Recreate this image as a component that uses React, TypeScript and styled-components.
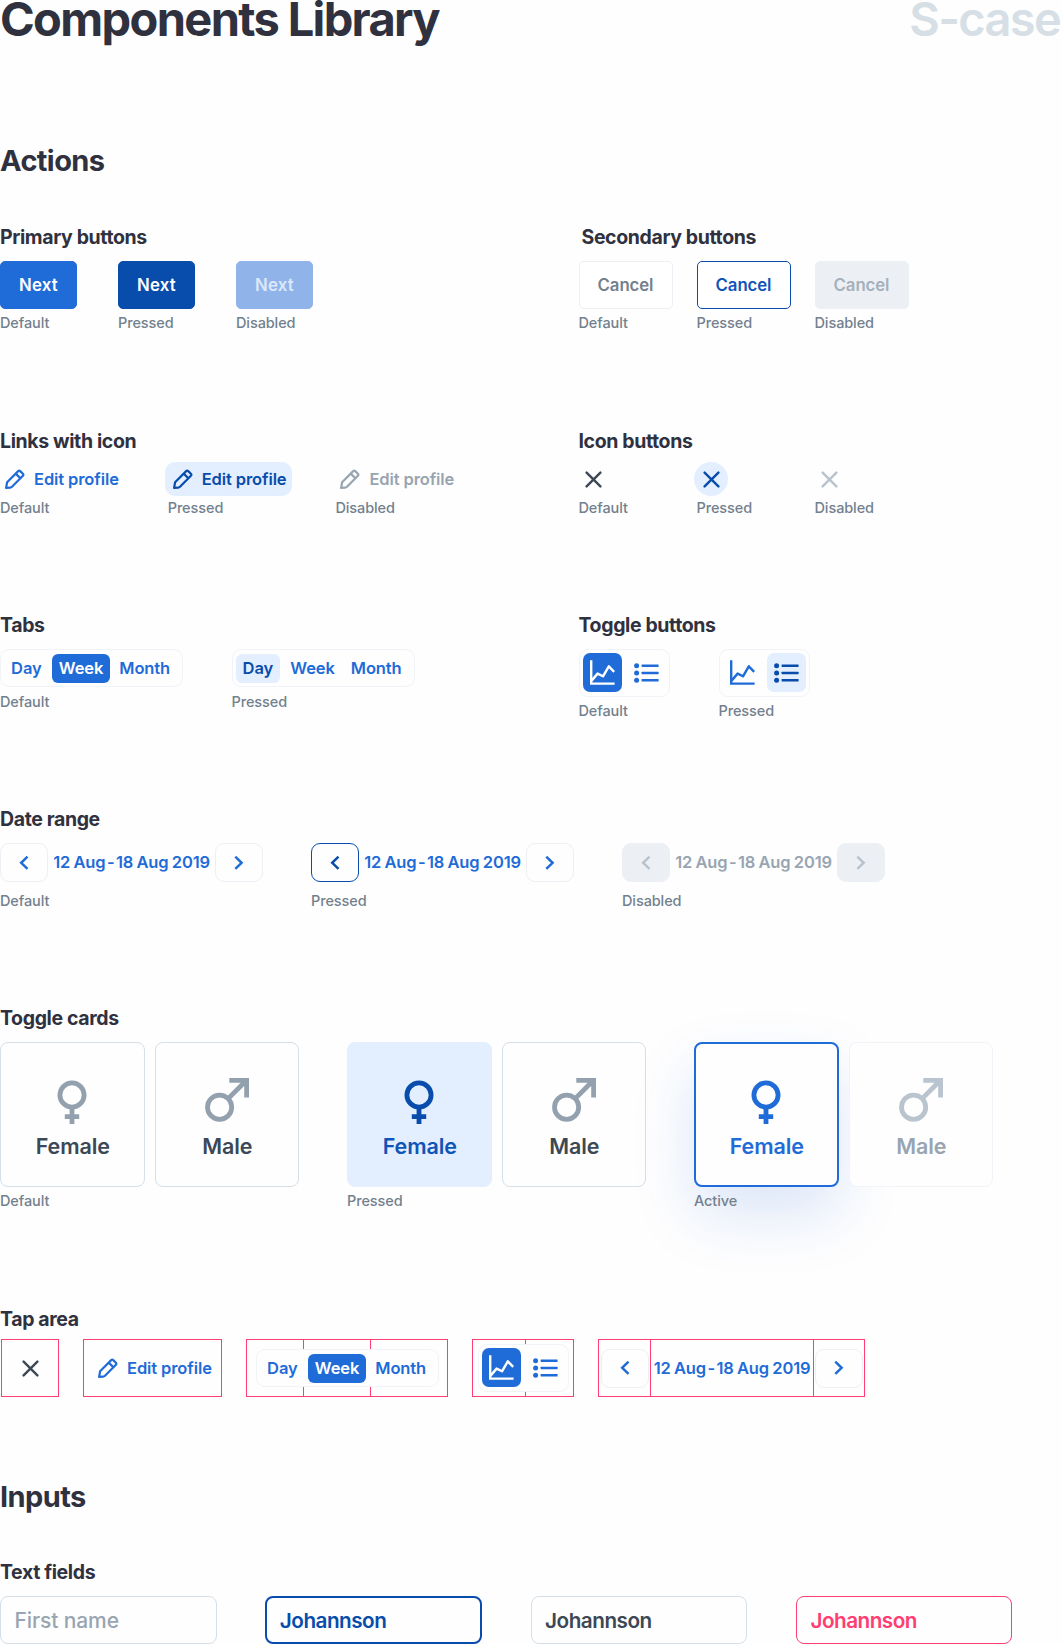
import React from "react";
import styled, { createGlobalStyle, css } from "styled-components";

const c = {
  ink: "#30313f",
  text: "#3c4855",
  grey: "#73808d",
  mute: "#98a5b1",
  faint: "#b8c3ce",
  line: "#d5dfe8",
  hair: "#f0f4f8",
  fill: "#ecf0f5",
  blue: "#1f6bd8",
  deep: "#084cac",
  sky: "#e3efff",
  red: "#ff3d73",
};

const Global = createGlobalStyle`
  * { box-sizing: border-box; }
  body { margin: 0; background: #fefefe; }
  button { font: inherit; padding: 0; margin: 0; border: 0; background: none; }
  svg { display: block; flex: none; }
`;

const Page = styled.main`
  width: 1062px;
  height: 1645px;
  overflow: hidden;
  font-family: Inter, "Liberation Sans", sans-serif;
  color: ${c.ink};
  white-space: nowrap;
`;

const Header = styled.header`
  display: flex;
  justify-content: space-between;
  height: 146px;
  padding-right: 2px;
`;

const Title = styled.h1<{ $pale?: boolean }>`
  margin: 0;
  font-size: 47px;
  line-height: 37px;
  font-weight: ${(p) => (p.$pale ? 600 : 700)};
  letter-spacing: ${(p) => (p.$pale ? -1.7 : -1.65)}px;
  color: ${(p) => (p.$pale ? "#d6dfe6" : c.ink)};
`;

const H2 = styled.h2<{ $h: number }>`
  margin: 0;
  height: ${(p) => p.$h}px;
  font-size: 29px;
  line-height: 30px;
  font-weight: 700;
  letter-spacing: -0.6px;
`;

const Row = styled.div<{ $h: number }>`
  display: grid;
  grid-template-columns: 578.5px 1fr;
  height: ${(p) => p.$h}px;
`;

const Full = styled.section<{ $h: number }>`
  height: ${(p) => p.$h}px;
`;

const H3 = styled.h3<{ $indent?: number }>`
  margin: 0 0 12px;
  padding-left: ${(p) => p.$indent ?? 0}px;
  font-size: 19.5px;
  line-height: 24px;
  font-weight: 700;
  letter-spacing: -0.38px;
`;

const States = styled.div<{ $gap: number }>`
  display: flex;
  align-items: flex-start;
  gap: ${(p) => p.$gap}px;
`;

const State = styled.div<{ $w?: number; $gap?: number }>`
  display: flex;
  flex-direction: column;
  align-items: flex-start;
  width: ${(p) => (p.$w ? p.$w + "px" : "auto")};
  gap: ${(p) => p.$gap ?? 5}px;
`;

const Caption = styled.span`
  font-size: 14.5px;
  line-height: 20px;
  font-weight: 500;
  color: ${c.grey};
  letter-spacing: -0.1px;
`;

type Look = "default" | "pressed" | "disabled";

const label = css`
  font-size: 16.5px;
  font-weight: 600;
  line-height: 20px;
  letter-spacing: -0.1px;
`;

const Button = styled.button<{ $kind: "primary" | "secondary"; $look: Look }>`
  ${label}
  width: ${(p) => (p.$kind === "primary" ? 77 : 94)}px;
  height: 48px;
  padding-bottom: 1px;
  font-size: 16.8px;
  border-radius: 5px;
  border: 1px solid transparent;
  ${(p) =>
    p.$kind === "primary"
      ? {
          default: `background:${c.blue};border-color:${c.blue};color:#fff;letter-spacing:0.2px;`,
          pressed: `background:${c.deep};border-color:${c.deep};color:#fff;letter-spacing:0.2px;`,
          disabled: `background:#90b4ea;border-color:#90b4ea;color:#dce8fa;letter-spacing:0.2px;`,
        }[p.$look]
      : {
          default: `background:#fff;border-color:${c.fill};color:${c.grey};`,
          pressed: `background:#fff;border-color:${c.deep};color:#0f55b8;`,
          disabled: `background:${c.fill};border-color:${c.fill};color:#a5b0bb;`,
        }[p.$look]}
`;

const LinkButton = styled.button<{ $look: Look }>`
  ${label}
  display: flex;
  align-items: center;
  gap: 9px;
  width: 127px;
  height: 34px;
  margin: -3px 0 0 -3px;
  padding: 0 0 0 8px;
  border-radius: 10px;
  color: ${(p) => ({ default: c.blue, pressed: c.deep, disabled: c.mute })[p.$look]};
  background: ${(p) => (p.$look === "pressed" ? c.sky : "transparent")};
`;

const IconButton = styled.button<{ $look: Look }>`
  display: flex;
  align-items: center;
  justify-content: center;
  width: 34px;
  height: 34px;
  margin: -3px 0 0 -2.5px;
  border-radius: 50%;
  color: ${(p) => ({ default: c.text, pressed: c.deep, disabled: c.faint })[p.$look]};
  background: ${(p) => (p.$look === "pressed" ? c.sky : "transparent")};
`;

const TabBar = styled.div`
  position: relative;
  display: flex;
  align-items: center;
  width: 183px;
  height: 38px;
  padding: 0 3px;
  border: 1px solid ${c.hair};
  border-radius: 9px;
  background: #fefefe;
`;

type Mark = "none" | "active" | "pressed";

const markStyle = css<{ $mark: Mark }>`
  color: ${(p) => ({ none: c.blue, active: "#fff", pressed: c.deep })[p.$mark]};
  background: ${(p) => ({ none: "transparent", active: c.blue, pressed: c.sky })[p.$mark]};
`;

const Tab = styled.button<{ $mark: Mark; $w: number }>`
  ${label}
  ${markStyle}
  width: ${(p) => p.$w}px;
  height: 29px;
  border-radius: 6px;

  &:nth-child(2) {
    margin-left: 3px;
  }
`;

const ToggleBar = styled.div`
  position: relative;
  display: flex;
  justify-content: space-between;
  width: 91px;
  height: 48px;
  padding: 3px;
  border: 1px solid ${c.hair};
  border-radius: 9px;
  background: #fefefe;
`;

const Toggle = styled.button<{ $mark: Mark }>`
  ${markStyle}
  display: flex;
  align-items: center;
  justify-content: center;
  width: 39px;
  height: 39px;
  border-radius: 7px;
`;

const Range = styled.div`
  display: flex;
  align-items: center;
  height: 39px;
`;

const Arrow = styled.button<{ $look: Look }>`
  display: flex;
  align-items: center;
  justify-content: center;
  width: 48px;
  height: 39px;
  border-radius: 9px;
  border: 1px solid ${(p) => ({ default: c.fill, pressed: c.deep, disabled: c.fill })[p.$look]};
  background: ${(p) => (p.$look === "disabled" ? c.fill : "#fefefe")};
  color: ${(p) => ({ default: c.blue, pressed: c.deep, disabled: c.faint })[p.$look]};
`;

const Dates = styled.span<{ $off?: boolean; $w: number }>`
  ${label}
  width: ${(p) => p.$w}px;
  padding-bottom: 1px;
  text-align: center;
  letter-spacing: -0.17px;
  word-spacing: -0.6px;
  color: ${(p) => (p.$off ? c.mute : c.blue)};
`;

const Dash = styled.span`
  margin: 0 -1.9px;
`;

const Pair = styled.div`
  display: flex;
  gap: 10px;
`;

type CardLook = "default" | "pressed" | "active" | "off";

const Card = styled.div<{ $look: CardLook }>`
  position: relative;
  display: flex;
  flex-direction: column;
  align-items: center;
  width: 144.5px;
  height: 144.5px;
  padding-top: ${(p) => (p.$look === "active" ? 33 : 34)}px;
  border-radius: 8px;
  border: ${(p) => (p.$look === "active" ? 2 : 1)}px solid
    ${(p) => ({ default: c.line, pressed: c.sky, active: c.blue, off: c.hair })[p.$look]};
  background: ${(p) => (p.$look === "pressed" ? c.sky : "#fefefe")};
  box-shadow: ${(p) => (p.$look === "active" ? "0 28px 62px rgba(20, 85, 215, 0.15)" : "none")};
  color: ${(p) => ({ default: "#93a1af", pressed: c.deep, active: c.blue, off: "#b9c4cf" })[p.$look]};
`;

const CardLabel = styled.span<{ $look: CardLook }>`
  margin: 7px 0 0 1px;
  font-size: 21.5px;
  line-height: 28px;
  font-weight: 600;
  letter-spacing: -0.1px;
  color: ${(p) => ({ default: c.text, pressed: "#0f55b8", active: c.blue, off: c.mute })[p.$look]};
`;

const Over = styled(Caption)`
  position: relative;
`;

const TapRow = styled.div`
  display: flex;
  margin: -4px 0 0 1px;
`;

const TapArea = styled.div<{ $w: number; $ml: number; $left: number }>`
  position: relative;
  display: flex;
  align-items: center;
  width: ${(p) => p.$w}px;
  height: 58px;
  margin-left: ${(p) => p.$ml}px;
  padding-left: ${(p) => p.$left}px;
  border: 1px solid ${c.red};
`;

const Divider = styled.i<{ $x: number }>`
  position: absolute;
  top: 0;
  bottom: 0;
  left: ${(p) => p.$x}px;
  width: 1px;
  background: ${c.red};
`;

const Segment = styled.div<{ $w: number; $line?: boolean }>`
  display: flex;
  align-items: center;
  justify-content: center;
  width: ${(p) => p.$w}px;
  height: 56px;
  border-left: ${(p) => (p.$line ? `1px solid ${c.red}` : "none")};
`;

const TapLink = styled(LinkButton)`
  margin: 0;
`;

const TapIcon = styled(IconButton)`
  margin: 0;
`;

const Fields = styled.div`
  display: flex;
  gap: 48.8px;
`;

const Field = styled.div<{ $look: "empty" | "focus" | "filled" | "error" }>`
  width: 216.5px;
  height: 48px;
  padding-left: ${(p) => (p.$look === "focus" ? 12.5 : 13.5)}px;
  display: flex;
  align-items: center;
  border-radius: 8px;
  border: ${(p) => (p.$look === "focus" ? 2 : 1)}px solid
    ${(p) => ({ empty: c.line, focus: c.deep, filled: c.line, error: c.red })[p.$look]};
  color: ${(p) => ({ empty: c.mute, focus: c.deep, filled: c.text, error: c.red })[p.$look]};
  font-size: ${(p) => (p.$look === "empty" ? 21 : 20.7)}px;
  font-weight: ${(p) => (p.$look === "empty" ? 500 : 600)};
  letter-spacing: ${(p) => (p.$look === "empty" ? -0.1 : -0.5)}px;
`;

const Pencil = () => (
  <svg width="20" height="20" viewBox="0 0 20 20" fill="none" stroke="currentColor" strokeWidth="2.2" strokeLinejoin="round">
    <path d="M1.1 18.9 2.1 13.2 13.2 2.1Q14.2 1.1 15.2 2.1L17.9 4.8Q18.9 5.8 17.9 6.8L7 17.7Q6.2 18.5 5 18.6Z" />
    <path d="M10.7 4.6 15.4 9.3" />
  </svg>
);

const Cross = () => (
  <svg width="17" height="17" viewBox="0 0 17 17" stroke="currentColor" strokeWidth="2.4" strokeLinecap="round">
    <path d="M1.6 1.6 15.4 15.4M15.4 1.6 1.6 15.4" />
  </svg>
);

const Chart = () => (
  <svg width="25" height="25" viewBox="0 0 25 25" fill="none" stroke="currentColor" strokeWidth="2.4">
    <path d="M1.2 0.3V23.6H24.6" />
    <path d="M1.6 20.6 7.6 13.6 13 16.3 18.8 6.3 24.2 11.8" strokeLinejoin="round" />
  </svg>
);

const List = () => (
  <svg width="25" height="24" viewBox="0 0 25 24" fill="currentColor">
    {[4.7, 12, 19.3].map((y) => (
      <React.Fragment key={y}>
        <circle cx="2.6" cy={y} r="2.5" />
        <rect x="7.6" y={y - 1.25} width="17" height="2.5" rx="0.4" />
      </React.Fragment>
    ))}
  </svg>
);

const Chevron = ({ right }: { right?: boolean }) => (
  <svg width="10" height="14" viewBox="0 0 10 14" fill="none" stroke="currentColor" strokeWidth="2.5">
    <path d={right ? "M1.3 0.7 7.6 6.8 1.3 12.9" : "M8.5 0.7 2.2 6.8 8.5 12.9"} />
  </svg>
);

const Female = () => (
  <svg width="58" height="48" viewBox="0 0 58 48" fill="none" stroke="currentColor" strokeWidth="4.8">
    <circle cx="29" cy="18" r="12.1" />
    <path d="M29 30.5V47M21.8 39.6H36.2" />
  </svg>
);

const Male = () => (
  <svg width="58" height="48" viewBox="0 0 58 48" fill="none" stroke="currentColor" strokeWidth="4.8">
    <circle cx="21.6" cy="30.2" r="12.1" />
    <path d="M30.4 21.4 47 4.8M31.3 3.4H48.6V20.6" />
  </svg>
);

const EditLink = ({ look }: { look: Look }) => (
  <LinkButton $look={look}>
    <Pencil />
    Edit profile
  </LinkButton>
);

const Tabs = ({ day, week }: { day: Mark; week: Mark }) => (
  <TabBar>
    <Tab $mark={day} $w={45}>Day</Tab>
    <Tab $mark={week} $w={59}>Week</Tab>
    <Tab $mark="none" $w={69}>Month</Tab>
  </TabBar>
);

const Toggles = ({ chart, list }: { chart: Mark; list: Mark }) => (
  <ToggleBar>
    <Toggle $mark={chart}><Chart /></Toggle>
    <Toggle $mark={list}><List /></Toggle>
  </ToggleBar>
);

const DateText = ({ width, off }: { width: number; off?: boolean }) => (
  <Dates $w={width} $off={off}>
    12 Aug <Dash>-</Dash> 18 Aug 2019
  </Dates>
);

const DateRange = ({ look }: { look: Look }) => (
  <Range>
    <Arrow $look={look}><Chevron /></Arrow>
    <DateText width={167} off={look === "disabled"} />
    <Arrow $look={look === "disabled" ? "disabled" : "default"}><Chevron right /></Arrow>
  </Range>
);

const Cards = ({ female, male }: { female: CardLook; male: CardLook }) => (
  <Pair>
    <Card $look={female}>
      <Female />
      <CardLabel $look={female}>Female</CardLabel>
    </Card>
    <Card $look={male}>
      <Male />
      <CardLabel $look={male}>Male</CardLabel>
    </Card>
  </Pair>
);

const LOOKS: Look[] = ["default", "pressed", "disabled"];
const NAMES = { default: "Default", pressed: "Pressed", disabled: "Disabled" };

export default function App() {
  return (
    <Page>
      <Global />
      <Header>
        <Title>Components Library</Title>
        <Title $pale>S-case</Title>
      </Header>

      <H2 $h={79}>Actions</H2>

      <Row $h={204}>
        <section>
          <H3>Primary buttons</H3>
          <States $gap={41}>
            {LOOKS.map((l) => (
              <State key={l} $w={77} $gap={4}>
                <Button $kind="primary" $look={l}>Next</Button>
                <Caption>{NAMES[l]}</Caption>
              </State>
            ))}
          </States>
        </section>
        <section>
          <H3 $indent={3}>Secondary buttons</H3>
          <States $gap={24}>
            {LOOKS.map((l) => (
              <State key={l} $w={94} $gap={4}>
                <Button $kind="secondary" $look={l}>Cancel</Button>
                <Caption>{NAMES[l]}</Caption>
              </State>
            ))}
          </States>
        </section>
      </Row>

      <Row $h={184}>
        <section>
          <H3>Links with icon</H3>
          <States $gap={0}>
            {LOOKS.map((l) => (
              <State key={l} $w={167.7} $gap={2}>
                <EditLink look={l} />
                <Caption>{NAMES[l]}</Caption>
              </State>
            ))}
          </States>
        </section>
        <section>
          <H3>Icon buttons</H3>
          <States $gap={0}>
            {LOOKS.map((l) => (
              <State key={l} $w={118} $gap={2}>
                <IconButton $look={l}><Cross /></IconButton>
                <Caption>{NAMES[l]}</Caption>
              </State>
            ))}
          </States>
        </section>
      </Row>

      <Row $h={194}>
        <section>
          <H3>Tabs</H3>
          <States $gap={48.5}>
            <State>
              <Tabs day="none" week="active" />
              <Caption>Default</Caption>
            </State>
            <State>
              <Tabs day="pressed" week="none" />
              <Caption>Pressed</Caption>
            </State>
          </States>
        </section>
        <section>
          <H3>Toggle buttons</H3>
          <States $gap={49}>
            <State $gap={4}>
              <Toggles chart="active" list="none" />
              <Caption>Default</Caption>
            </State>
            <State $gap={4}>
              <Toggles chart="none" list="pressed" />
              <Caption>Pressed</Caption>
            </State>
          </States>
        </section>
      </Row>

      <Full $h={199}>
        <H3>Date range</H3>
        <States $gap={48}>
          {LOOKS.map((l) => (
            <State key={l} $gap={9}>
              <DateRange look={l} />
              <Caption>{NAMES[l]}</Caption>
            </State>
          ))}
        </States>
      </Full>

      <Full $h={301}>
        <H3>Toggle cards</H3>
        <States $gap={48}>
          <State $gap={4}>
            <Cards female="default" male="default" />
            <Over>Default</Over>
          </State>
          <State $gap={4}>
            <Cards female="pressed" male="default" />
            <Over>Pressed</Over>
          </State>
          <State $gap={4}>
            <Cards female="active" male="off" />
            <Over>Active</Over>
          </State>
        </States>
      </Full>

      <Full $h={175}>
        <H3>Tap area</H3>
        <TapRow>
          <TapArea $w={58} $ml={0} $left={11}>
            <TapIcon $look="default"><Cross /></TapIcon>
          </TapArea>
          <TapArea $w={139} $ml={24} $left={6}>
            <TapLink $look="default"><Pencil />Edit profile</TapLink>
          </TapArea>
          <TapArea $w={202} $ml={24} $left={9}>
            <Divider $x={56} />
            <Divider $x={123} />
            <Tabs day="none" week="active" />
          </TapArea>
          <TapArea $w={102} $ml={24} $left={5}>
            <Divider $x={52} />
            <Toggles chart="active" list="none" />
          </TapArea>
          <TapArea $w={267} $ml={24} $left={0}>
            <Segment $w={51}>
              <Arrow $look="default"><Chevron /></Arrow>
            </Segment>
            <Segment $w={163} $line>
              <DateText width={162} />
            </Segment>
            <Segment $w={51} $line>
              <Arrow $look="default"><Chevron right /></Arrow>
            </Segment>
          </TapArea>
        </TapRow>
      </Full>

      <H2 $h={78}>Inputs</H2>
      <section>
        <H3>Text fields</H3>
        <Fields>
          <Field $look="empty">First name</Field>
          <Field $look="focus">Johannson</Field>
          <Field $look="filled">Johannson</Field>
          <Field $look="error">Johannson</Field>
        </Fields>
      </section>
    </Page>
  );
}
